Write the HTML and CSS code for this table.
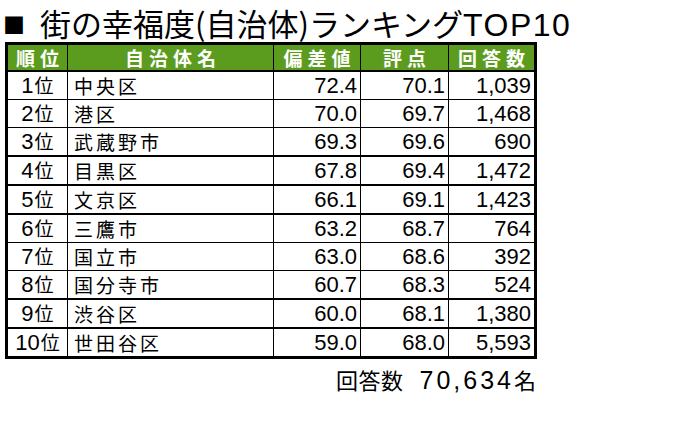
FILE: index.html
```html
<!DOCTYPE html>
<html lang="ja">
<head>
<meta charset="utf-8">
<link rel="stylesheet" href="styles.css">
</head>
<body>
<div class="page">
  <h1 class="title"><span class="sq">■</span>街の幸福度(自治体)ランキング<span class="latin">TOP10</span></h1>
  <table class="rank">
    <colgroup>
      <col class="c1"><col class="c2"><col class="c3"><col class="c4"><col class="c5">
    </colgroup>
    <thead>
      <tr><th>順位</th><th>自治体名</th><th>偏差値</th><th>評点</th><th>回答数</th></tr>
    </thead>
    <tbody>
      <tr><td class="pos">1<span class="k">位</span></td><td class="name">中央区</td><td class="num">72.4</td><td class="num">70.1</td><td class="num">1,039</td></tr>
      <tr><td class="pos">2<span class="k">位</span></td><td class="name">港区</td><td class="num">70.0</td><td class="num">69.7</td><td class="num">1,468</td></tr>
      <tr><td class="pos">3<span class="k">位</span></td><td class="name">武蔵野市</td><td class="num">69.3</td><td class="num">69.6</td><td class="num">690</td></tr>
      <tr class="thick"><td class="pos">4<span class="k">位</span></td><td class="name">目黒区</td><td class="num">67.8</td><td class="num">69.4</td><td class="num">1,472</td></tr>
      <tr class="thick"><td class="pos">5<span class="k">位</span></td><td class="name">文京区</td><td class="num">66.1</td><td class="num">69.1</td><td class="num">1,423</td></tr>
      <tr class="thick"><td class="pos">6<span class="k">位</span></td><td class="name">三鷹市</td><td class="num">63.2</td><td class="num">68.7</td><td class="num">764</td></tr>
      <tr><td class="pos">7<span class="k">位</span></td><td class="name">国立市</td><td class="num">63.0</td><td class="num">68.6</td><td class="num">392</td></tr>
      <tr><td class="pos">8<span class="k">位</span></td><td class="name">国分寺市</td><td class="num">60.7</td><td class="num">68.3</td><td class="num">524</td></tr>
      <tr class="thick"><td class="pos">9<span class="k">位</span></td><td class="name">渋谷区</td><td class="num">60.0</td><td class="num">68.1</td><td class="num">1,380</td></tr>
      <tr class="thick"><td class="pos">10<span class="k">位</span></td><td class="name">世田谷区</td><td class="num">59.0</td><td class="num">68.0</td><td class="num">5,593</td></tr>
    </tbody>
  </table>
  <p class="total"><span class="label">回答数</span><span class="count">70,634</span>名</p>
</div>
</body>
</html>
```
FILE: styles.css
```css
html, body {
  margin: 0;
  padding: 0;
  background: #ffffff;
}
body {
  font-family: "Noto Sans CJK JP", "Noto Sans", sans-serif;
  color: #000000;
}
.page {
  padding: 0 0 0 5px;
}
.title {
  margin: 0;
  font-size: 31px;
  font-weight: 400;
  line-height: 45px;
  height: 42px;
  white-space: nowrap;
}
.title .latin {
  font-family: "Liberation Sans", "Noto Sans", sans-serif;
  font-size: 32px;
  letter-spacing: 1.5px;
}
.sq {
  display: inline-block;
  width: 37px;
  margin-left: -2px;
  font-size: 22px;
  line-height: 1;
  vertical-align: 3px;
}
.rank {
  border-collapse: collapse;
  table-layout: fixed;
  width: 529px;
  border: 3px solid #000;
}
.c1 { width: 61px; }
.c2 { width: 206px; }
.c3 { width: 87px; }
.c4 { width: 88px; }
.c5 { width: 87px; }
.rank th {
  background: #5b9c1e;
  color: #ffffff;
  font-weight: 700;
  font-size: 19px;
  letter-spacing: 5px;
  text-indent: 5px;
  height: 25px;
  line-height: 25px;
  padding: 0;
  border: 1px solid #000;
  border-bottom: 2px solid #000;
  text-align: center;
}
.rank td {
  font-family: "Liberation Sans", "Noto Sans CJK JP", sans-serif;
  font-size: 22px;
  font-weight: 400;
  height: 27px;
  line-height: 27px;
  padding: 0;
  border: 1px solid #000;
  white-space: nowrap;
}
.rank tr.thick td {
  border-top: 2px solid #000;
}
.rank td.pos {
  text-align: center;
}
.rank td.pos .k {
  font-family: "Noto Sans CJK JP", sans-serif;
  font-size: 19px;
  line-height: 1;
  margin-left: 1px;
}
.rank td.name {
  font-family: "Noto Sans CJK JP", sans-serif;
  font-size: 19px;
  letter-spacing: 3px;
  padding-left: 6px;
}
.rank td.num {
  text-align: right;
  padding-right: 3px;
}
.total {
  margin: 6px 0 0 0;
  width: 531px;
  text-align: right;
  font-size: 22px;
  line-height: 28px;
  white-space: nowrap;
}
.label {
  letter-spacing: 0.5px;
  margin-right: 16px;
}
.count {
  font-family: "Liberation Sans", "Noto Sans", sans-serif;
  font-size: 25px;
  letter-spacing: 3px;
}
```
